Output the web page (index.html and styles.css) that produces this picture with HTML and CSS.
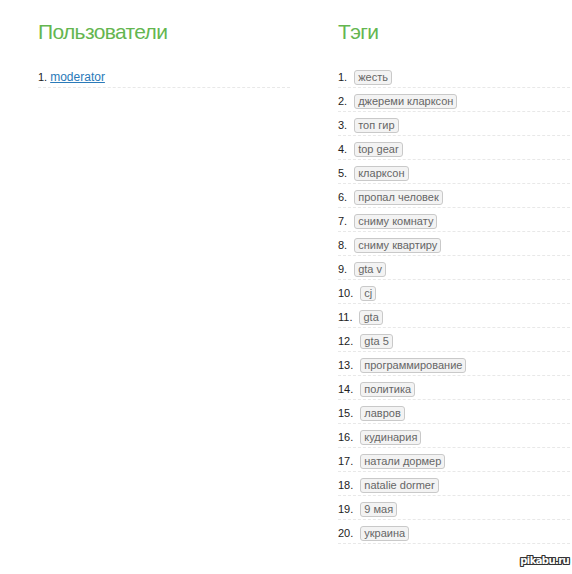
FILE: index.html
```html
<!DOCTYPE html>
<html lang="ru">
<head>
<meta charset="utf-8">
<link rel="stylesheet" href="styles.css">
</head>
<body>
<div class="page">
  <section class="col col-users">
    <h2 class="title">Пользователи</h2>
    <ol class="list">
      <li class="row"><span class="num">1.</span> <a class="user" href="#">moderator</a></li>
    </ol>
  </section>
  <section class="col col-tags">
    <h2 class="title">Тэги</h2>
    <ol class="list">
      <li class="row"><span class="num num-t">1.</span><span class="tag">жесть</span></li>
      <li class="row"><span class="num num-t">2.</span><span class="tag">джереми кларксон</span></li>
      <li class="row"><span class="num num-t">3.</span><span class="tag">топ гир</span></li>
      <li class="row"><span class="num num-t">4.</span><span class="tag">top gear</span></li>
      <li class="row"><span class="num num-t">5.</span><span class="tag">кларксон</span></li>
      <li class="row"><span class="num num-t">6.</span><span class="tag">пропал человек</span></li>
      <li class="row"><span class="num num-t">7.</span><span class="tag">сниму комнату</span></li>
      <li class="row"><span class="num num-t">8.</span><span class="tag">сниму квартиру</span></li>
      <li class="row"><span class="num num-t">9.</span><span class="tag">gta v</span></li>
      <li class="row"><span class="num num-t">10.</span><span class="tag">cj</span></li>
      <li class="row"><span class="num num-t">11.</span><span class="tag">gta</span></li>
      <li class="row"><span class="num num-t">12.</span><span class="tag">gta 5</span></li>
      <li class="row"><span class="num num-t">13.</span><span class="tag">программирование</span></li>
      <li class="row"><span class="num num-t">14.</span><span class="tag">политика</span></li>
      <li class="row"><span class="num num-t">15.</span><span class="tag">лавров</span></li>
      <li class="row"><span class="num num-t">16.</span><span class="tag">кудинария</span></li>
      <li class="row"><span class="num num-t">17.</span><span class="tag">натали дормер</span></li>
      <li class="row"><span class="num num-t">18.</span><span class="tag">natalie dormer</span></li>
      <li class="row"><span class="num num-t">19.</span><span class="tag">9 мая</span></li>
      <li class="row"><span class="num num-t">20.</span><span class="tag">украина</span></li>
    </ol>
  </section>
</div>
<div class="watermark">pikabu.ru</div>
</body>
</html>
```

FILE: styles.css
```css
html, body {
  margin: 0;
  padding: 0;
  background: #ffffff;
  overflow: hidden;
}
body {
  font-family: "Liberation Sans", Arial, sans-serif;
  font-size: 11px;
  color: #222;
  width: 572px;
  height: 574px;
  position: relative;
}
.page {
  display: flex;
  gap: 48px;
  padding: 19px 0 0 38px;
}
.col {
  width: 252px;
  flex: none;
}
.title {
  margin: 0 0 19px;
  font-weight: normal;
  font-size: 21px;
  line-height: 26px;
  color: #64b650;
  letter-spacing: -0.65px;
}
.list {
  list-style: none;
  margin: 0;
  padding: 0;
}
.row {
  display: flex;
  align-items: center;
  border-bottom: 1px dashed #e8e8e8;
  box-sizing: content-box;
  line-height: 15px;
  padding-top: 3px;
  height: 20px;
}
.num {
  color: #222;
  margin-right: 3px;
}
.num-t {
  margin-right: 7px;
}
.user {
  color: #2a7ab9;
  text-decoration: underline;
  font-size: 12px;
}
.tag {
  display: inline-block;
  border: 1px solid #c9c9c9;
  border-radius: 3px;
  background: #f3f3f3;
  color: #666;
  padding: 0 3px;
  line-height: 13px;
  font-size: 11px;
}
.watermark {
  position: absolute;
  right: 3px;
  bottom: 8px;
  font-family: "DejaVu Sans", sans-serif;
  font-weight: bold;
  font-size: 10px;
  letter-spacing: -0.6px;
  color: #ffffff;
  text-shadow: 1px 0 0 #333, -1px 0 0 #333, 0 1px 0 #333, 0 -1px 0 #333, 1px 1px 0 #333, -1px -1px 0 #333, 1px -1px 0 #333, -1px 1px 0 #333;
}
```
